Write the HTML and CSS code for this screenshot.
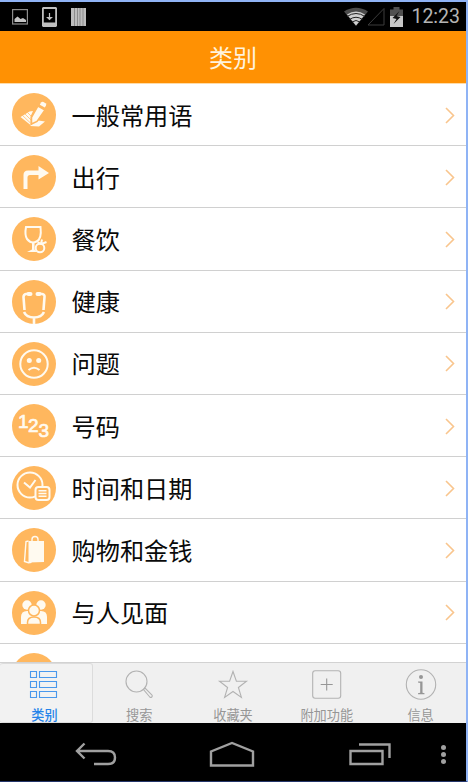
FILE: index.html
```html
<!DOCTYPE html>
<html lang="zh-CN">
<head>
  <meta charset="UTF-8" />
  <meta name="viewport" content="width=device-width, initial-scale=1.0"/>
  <title>类别</title>
  <link rel="stylesheet" href="styles.css">
</head>
<body>

  <div class="phone">
    <div class="status-bar">
      <div class="notifications">
        <svg width="16" height="16" viewBox="0 0 16 16">
          <rect x=".6" y=".6" width="14.8" height="14.4" fill="none" stroke="#8c8c8c" stroke-width="1.2"/>
          <path d="M2.500 13V10l3-2.500 3 2.500 2.500-1 3 2v2z" fill="#c4c4c4"/>
        </svg>
        <svg width="15" height="20" viewBox="0 0 15 20">
          <path fill-rule="evenodd" d="M1 0h13l1 1v18l-1 1H1l-1-1V1zM1.800 2v13.500h11.400V2z" fill="#c0c0c0"/>
          <path d="M7.500 6v6M5.500 10.500l2 2 2-2z" fill="#c0c0c0" stroke="#c0c0c0" stroke-width="1.200"/>
        </svg>
        <svg width="15" height="18" viewBox="0 0 15 18">
          <path d="M0 0h15v18H0z" fill="#bdbdbd"/>
          <path d="M3.500 0v18M6.500 0v18M9 0v18M12 0v18" stroke="#777" stroke-width=".7"/>
        </svg>
      </div>
      <div class="system">
        <svg class="wifi" width="24" height="19" viewBox="0 0 24 19">
          <path d="M0 4.500Q12-3 24 4.500L12 19z" fill="#4c4c4c"/>
          <path d="M3 7.500Q12 1.500 21 7.500L12 18.500z" fill="#d0d0d0"/>
          <path d="M3 9.500q9-6 18 0M5.500 12.500q6.500-4.500 13 0M8 15q4-3 8 0" fill="none" stroke="#222" stroke-width="1"/>
        </svg>
        <svg class="signal" width="18" height="19" viewBox="0 0 18 19">
          <path d="M17 1.500V18H1z" fill="none" stroke="#3c3c3c"/>
        </svg>
        <svg class="battery" width="13" height="20" viewBox="0 0 13 20">
          <path d="M0 2.500h3.500V0h6v2.500H13V20H0z" fill="#505050"/>
          <path d="M0 9h13v11H0z" fill="#c8c8c8"/>
          <path d="M9.500 4L2.500 11l4 1-3 5 7-7-4-1z" fill="#111"/>
        </svg>
        <span class="clock">12:23</span>
      </div>
    </div>

    <div class="header">类别</div>

    <div class="list">
      <div class="row">
        <svg class="icon" viewBox="0 0 44 44">
          <circle cx="22" cy="22" r="22"/>
          <path class="solid" d="M8.500 24l9-5.500 3.500-.500-2.500 5.500v8.500z"/>
          <path class="cut" d="M10.500 22.500l8 7.500M13 21l6 6M15.500 19.500l4 4"/>
          <path class="solid" d="M18 33l3.500-3 5-2.500 6.500 1L27 33.500z"/>
          <path class="solid edge" d="M26 13l7 4-8 11.500-5.500 2.500v-6.500z"/>
          <path class="solid" d="M29 9.500q1-1 2.500-.500l2 1.200q1.200 1 .5 2.300l-1.200 2-5-2.800z"/>
        </svg>
        <span class="label">一般常用语</span>
        <svg class="arrow" viewBox="0 0 10 17"><path d="M1 1l7.500 7.500L1 16"/></svg>
      </div>
      <div class="row">
        <svg class="icon" viewBox="0 0 44 44">
          <circle cx="22" cy="22" r="22"/>
          <path class="solid" d="M11.500 34V20q0-4.500 4.500-4.500h10.500v-4.500L37 18l-10.500 6.500V20H18q-2.500 0-2.500 2.500V34z"/>
        </svg>
        <span class="label">出行</span>
        <svg class="arrow" viewBox="0 0 10 17"><path d="M1 1l7.500 7.500L1 16"/></svg>
      </div>
      <div class="row">
        <svg class="icon" viewBox="0 0 44 44">
          <circle cx="22" cy="22" r="22"/>
          <path class="line" d="M14 10h14.500q1.500 12-4 14.500-2 1-3.500 1-3 0-6-3.500-2.500-4-1-12z"/>
          <path class="solid" d="M20 25h2.500v7.500l3 2.500H15l5-2.500z"/>
          <circle class="line box" cx="28" cy="31" r="4.300"/>
          <path class="line" d="M25.500 25.500l4 1.500 5-2M29 27l1-4.500"/>
        </svg>
        <span class="label">餐饮</span>
        <svg class="arrow" viewBox="0 0 10 17"><path d="M1 1l7.500 7.500L1 16"/></svg>
      </div>
      <div class="row">
        <svg class="icon" viewBox="0 0 44 44">
          <circle cx="22" cy="22" r="22"/>
          <path class="line thick" d="M18 13.500l-4 .500q-2.500.500-2.500 3l1 13M26 13.500l4 .500q3 .500 2.500 3l-1 13M12 32q2.500 5.500 10 5.500T32 32M22 37.500V44"/>
          <path class="line blob" d="M16.500 14h2M25.500 14h2"/>
        </svg>
        <span class="label">健康</span>
        <svg class="arrow" viewBox="0 0 10 17"><path d="M1 1l7.500 7.500L1 16"/></svg>
      </div>
      <div class="row">
        <svg class="icon" viewBox="0 0 44 44">
          <circle cx="22" cy="22" r="22"/>
          <circle class="line" cx="22" cy="22" r="13.700"/>
          <circle class="solid" cx="17.300" cy="18.500" r="2.500"/>
          <circle class="solid" cx="26.700" cy="18.500" r="2.500"/>
          <path class="line" d="M16.500 28q5.500-4.500 11 0"/>
        </svg>
        <span class="label">问题</span>
        <svg class="arrow" viewBox="0 0 10 17"><path d="M1 1l7.500 7.500L1 16"/></svg>
      </div>
      <div class="row">
        <svg class="icon" viewBox="0 0 44 44">
          <circle cx="22" cy="22" r="22"/>
          <text class="digit" x="6" y="23.500">1</text>
          <text class="digit" x="16" y="28">2</text>
          <text class="digit" x="26.500" y="33">3</text>
        </svg>
        <span class="label">号码</span>
        <svg class="arrow" viewBox="0 0 10 17"><path d="M1 1l7.500 7.500L1 16"/></svg>
      </div>
      <div class="row">
        <svg class="icon" viewBox="0 0 44 44">
          <circle cx="22" cy="22" r="22"/>
          <circle class="line" cx="18" cy="19" r="12.500"/>
          <path class="line" d="M12 16.500l6 5 5.500-7.500"/>
          <rect class="line box" x="23.500" y="21" width="14" height="13" rx="3"/>
          <path class="line thin" d="M26.500 24.700h8M26.500 27.500h8M26.500 30.300h8"/>
        </svg>
        <span class="label">时间和日期</span>
        <svg class="arrow" viewBox="0 0 10 17"><path d="M1 1l7.500 7.500L1 16"/></svg>
      </div>
      <div class="row">
        <svg class="icon" viewBox="0 0 44 44">
          <circle cx="22" cy="22" r="22"/>
          <path class="solid" d="M16.500 13H32v21l-15.500.500z"/>
          <path class="line thin" d="M16.500 13l-2.500.500-1.500 20 4 1.200 3-.500M20 14v-2.500q0-3 3-3t3 3V14"/>
        </svg>
        <span class="label">购物和金钱</span>
        <svg class="arrow" viewBox="0 0 10 17"><path d="M1 1l7.500 7.500L1 16"/></svg>
      </div>
      <div class="row">
        <svg class="icon" viewBox="0 0 44 44">
          <circle cx="22" cy="22" r="22"/>
          <circle class="solid" cx="15" cy="14" r="4.700"/>
          <circle class="solid" cx="29" cy="14" r="4.700"/>
          <path class="solid" d="M9 33v-7q0-6 6-6h14q6 0 6 6v7z"/>
          <circle class="solid edge" cx="22" cy="19.500" r="5.500"/>
          <path class="solid edge" d="M15.500 33.500v-2q0-5.500 6.500-5.500t6.500 5.500v2z"/>
        </svg>
        <span class="label">与人见面</span>
        <svg class="arrow" viewBox="0 0 10 17"><path d="M1 1l7.500 7.500L1 16"/></svg>
      </div>
      <div class="row">
        <svg class="icon" viewBox="0 0 44 44"><circle cx="22" cy="22" r="22"/></svg>
      </div>
    </div>

    <div class="tabs">
      <div class="tab active">
        <svg width="32" height="32" viewBox="0 0 32 32">
          <path d="M2.500 2.500h6v6h-6zM11.500 2.500h17v6h-17zM2.500 12.500h6v6h-6zM11.500 12.500h17v6h-17zM2.500 22.500h6v6h-6zM11.500 22.500h17v6h-17z"/>
        </svg>
        <span>类别</span>
      </div>
      <div class="tab">
        <svg width="32" height="32" viewBox="0 0 32 32">
          <circle cx="13.500" cy="12.500" r="10.500"/>
          <path d="M20.500 20.500l1.500-1.500 7 7q.800 1-.200 2t-2 0z"/>
        </svg>
        <span>搜索</span>
      </div>
      <div class="tab">
        <svg width="32" height="32" viewBox="0 0 32 32">
          <path d="M16 2.500l3.400 9.600 10.100.200-8.100 6.200 3 9.900-8.400-5.900-8.400 5.900 3-9.900-8.100-6.200 10.100-.200z"/>
        </svg>
        <span>收藏夹</span>
      </div>
      <div class="tab">
        <svg width="32" height="32" viewBox="0 0 32 32">
          <rect x="1.700" y="1.800" width="28" height="27.500" rx="2.500"/>
          <path class="plus" d="M15.700 9.500v12M9.700 15.500h12"/>
        </svg>
        <span>附加功能</span>
      </div>
      <div class="tab">
        <svg width="32" height="32" viewBox="0 0 32 32">
          <circle cx="16" cy="15.500" r="14.700"/>
          <circle class="fill" cx="16" cy="8" r="2"/>
          <path class="fill" d="M13 12.500h4.500v11.300l2 .500v.900h-6.500v-.900l2.200-.500V13.900l-2.200-.500z"/>
        </svg>
        <span>信息</span>
      </div>
    </div>

    <div class="nav-bar">
      <svg class="back" width="42" height="24" viewBox="0 0 42 24">
        <path d="M9.500 1.500L2 9l7.500 7.500M2.500 9H33q7 0 7 6.500T33 22H19"/>
      </svg>
      <svg class="home" width="46" height="26" viewBox="0 0 46 26">
        <path d="M2 24.500V10.500L23 2l21 8.500v14z"/>
      </svg>
      <svg class="recent" width="42" height="24" viewBox="0 0 42 24">
        <path d="M1.500 9h32v13h-32zM10 2.500h30.500V16"/>
      </svg>
      <div class="more"><i></i><i></i><i></i></div>
    </div>
  </div>

</body>
</html>
```
FILE: styles.css
```css
* {
  box-sizing: border-box;
}

body {
  margin: 0;
  background: #fff;
  font-family: Roboto, "Noto Sans CJK SC", sans-serif;
}

svg {
  display: block;
  flex: none;
}

.phone {
  width: 468px;
  height: 782px;
  border-top: 2px solid #8fb3f5;
  border-right: 2px solid #8fb3f5;
  border-bottom: 1px solid #25366b;
  display: flex;
  flex-direction: column;
  overflow: hidden;
}

.status-bar {
  height: 29px;
  flex: none;
  background: #000;
  display: flex;
  justify-content: space-between;
  padding: 0 6px 0 12px;
}

.notifications,
.system {
  display: flex;
  align-items: center;
}

.notifications {
  gap: 14px;
}

.signal {
  margin-left: -1px;
}

.battery {
  margin-left: 5px;
}

.clock {
  color: #b4b4b4;
  font-size: 19.5px;
  margin-left: 8px;
}

.header {
  height: 53px;
  flex: none;
  background: #ff9103;
  border-bottom: 1px solid #ffdca8;
  color: #fff3de;
  font-size: 24px;
  line-height: 52px;
  padding-top: 2px;
  text-align: center;
}

.list {
  flex: 1;
  min-height: 0;
  overflow: hidden;
}

.row {
  height: 62.2px;
  border-bottom: 1px solid #d0d0d0;
  display: flex;
  align-items: center;
  padding: 1px 11px 0 11.5px;
}

.label {
  flex: 1;
  margin-left: 16px;
  padding-bottom: 2px;
  font-size: 24.2px;
  color: #0a0a0a;
}

.arrow {
  width: 10px;
  height: 17px;
  fill: none;
  stroke: #f9c58d;
  stroke-width: 1.6;
}

.icon {
  width: 44px;
  height: 44px;
  fill: #ffb75e;
}

.icon .solid,
.icon .digit {
  fill: #fffaf0;
}

.icon .cut {
  fill: none;
  stroke: #ffb75e;
  stroke-width: .7;
}

.icon .line {
  fill: none;
  stroke: #fffaf0;
  stroke-width: 2;
}

.icon .thick {
  stroke-width: 2.6;
}

.icon .thin {
  stroke-width: 1.4;
}

.icon .blob {
  stroke-width: 4;
  stroke-linecap: round;
}

.icon .box {
  fill: #ffb75e;
}

.icon .edge {
  stroke: #ffb75e;
  stroke-width: 1.5;
}

.icon .digit {
  font: 19px "Liberation Sans", sans-serif;
  stroke: #fffaf0;
  stroke-width: .7;
}

.tabs {
  height: 61px;
  flex: none;
  background: #f0f0f0;
  border-top: 1px solid #d2d2d2;
  display: flex;
  gap: 2px;
}

.tab {
  flex: 1;
  display: flex;
  flex-direction: column;
  align-items: center;
  padding: 6px 3px 0 0;
  color: #969696;
  font-size: 13.2px;
  line-height: 18px;
}

.tab:last-child {
  padding-right: 1px;
}

.tab svg {
  fill: none;
  stroke: #b2b2b2;
  stroke-width: 1.1;
}

.tab span {
  margin-top: 6px;
}

.tab .plus {
  stroke: #969696;
}

.tab .fill {
  fill: #969696;
  stroke: none;
}

.tab.active {
  color: #2583e9;
  font-weight: 500;
  background: #f2f2f2;
  border: 1px solid #dcdcdc;
  border-left: none;
  border-radius: 3px;
  padding-top: 5px;
}

.tab.active svg {
  stroke: #4a98ec;
}

.nav-bar {
  height: 58px;
  flex: none;
  background: #000;
  display: flex;
  align-items: center;
  padding: 4px 20px 0 75px;
}

.nav-bar svg {
  fill: none;
  stroke: #a0a0a0;
  stroke-width: 2.4;
}

.home {
  margin-left: 92px;
}

.recent {
  margin-left: 94px;
}

.more {
  margin-left: auto;
  display: flex;
  flex-direction: column;
  gap: 2px;
}

.more i {
  width: 5px;
  height: 5px;
  border-radius: 50%;
  background: #a0a0a0;
}
```
